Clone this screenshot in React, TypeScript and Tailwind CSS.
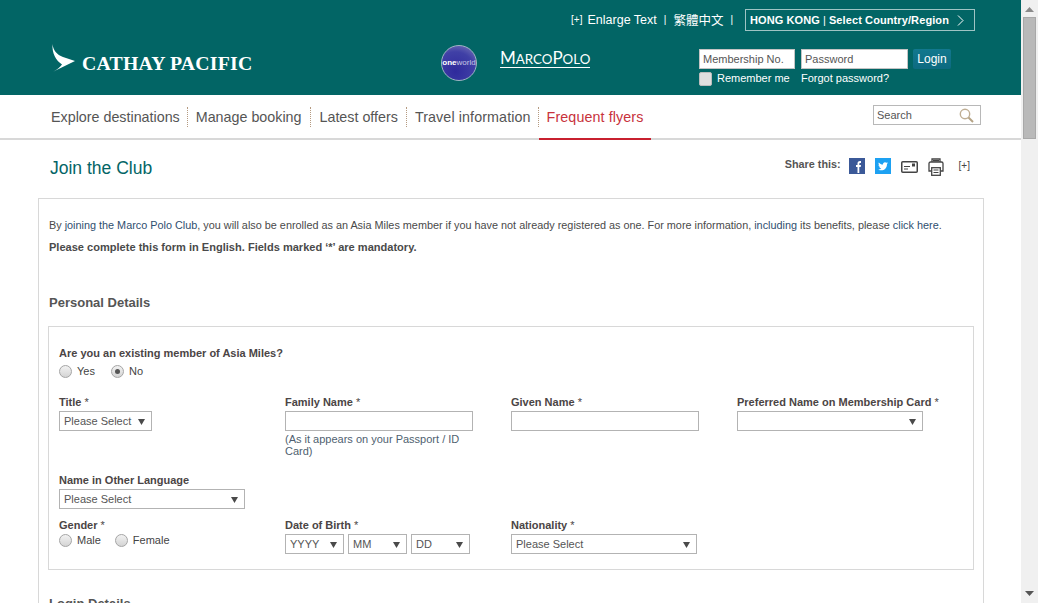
import React from "react";

const Arrow = () => (
  <svg width="7" height="7" viewBox="0 0 7 7" className="shrink-0">
    <path d="M0 1h7L3.500 7z" fill="#4a4a4a" />
  </svg>
);

const Select = ({ text, width }: { text?: string; width: string }) => (
  <div className={`${width} h-5 border border-[#b3b3b3] flex items-center justify-between pl-1 pr-[6px] text-[11px] leading-none text-[#555]`}>
    <span>{text}</span>
    <Arrow />
  </div>
);

const Radio = ({ label, checked }: { label: string; checked?: boolean }) => (
  <span className="flex items-center gap-[5px] text-[11px] leading-none text-[#444]">
    <span className="w-[13px] h-[13px] rounded-full border border-[#a5a5a5] bg-[linear-gradient(#f2f2f2,#d4d4d4)] flex items-center justify-center">
      {checked ? <span className="w-[5px] h-[5px] rounded-full bg-[#555]" /> : null}
    </span>
    {label}
  </span>
);

const Label = ({ children, required }: { children: React.ReactNode; required?: boolean }) => (
  <div className="text-[11px] leading-[13px] font-bold text-[#4b4545] whitespace-nowrap">
    {children}
    {required ? <span className="font-normal"> *</span> : null}
  </div>
);

const NavItem = ({ text, active, wide }: { text: string; active?: boolean; wide?: boolean }) => (
  <div className={`h-[45px] pt-[2px] flex items-center ${wide ? "tracking-[0.1px]" : ""} ${active ? "border-b-2 border-[#c8202f] text-[#c8323c] px-2 -mb-[2px]" : "text-[#555]"}`}>
    {text}
  </div>
);

const Sep = () => <div className="h-5 mx-2 border-l border-dotted border-[#b59a80]" />;

export default function App() {
  return (
    <div className="h-[603px] w-[1038px] flex overflow-hidden bg-white font-['Liberation_Sans',Arial,sans-serif]">
      <div className="w-[1021px] shrink-0">
        {/* header */}
        <div className="h-[95px] bg-[#026565] text-white flex flex-col">
          <div className="h-[40px] flex items-start justify-end pt-[9px] pr-[46px]">
            <div className="h-[22px] flex items-center text-[12.500px] leading-none">
              <span className="text-[10px] mr-[5px]">[+]</span>
              <span>Enlarge Text</span>
              <span className="text-[10px] ml-[7px] mr-[7px]">|</span>
              <span className="font-['Noto_Sans_CJK_TC',sans-serif]">繁體中文</span>
              <span className="text-[10px] ml-[7px] mr-[12px]">|</span>
            </div>
            <div className="w-[230px] h-[22px] border border-[#9fc4c4] flex items-center pl-[4px] text-[11px] font-bold whitespace-nowrap tracking-[0.1px]">
              HONG KONG <span className="font-normal mx-[3px]">|</span> Select Country/Region
              <svg width="7" height="11" viewBox="0 0 7 11" className="ml-[8px]">
                <path d="M1 .5l5 5-5 5" fill="none" stroke="#fff" strokeWidth="1" />
              </svg>
            </div>
          </div>
          <div className="flex">
            <div className="w-[441px] pl-[51px] flex items-start pt-[4px] shrink-0">
              <svg width="26" height="28" viewBox="0 0 26 28" className="shrink-0">
                <path d="M1.500 0C2 6 6 11 12 13l12 4L2.500 27.500C6 25.500 9.500 23 11 20.500 5 16.500.8 9 1.500 0z" fill="#fff" />
              </svg>
              <span className="ml-[5px] mt-[6px] text-[19.800px] leading-[26px] font-['Liberation_Serif',serif] font-bold whitespace-nowrap tracking-[0.2px]">CATHAY PACIFIC</span>
            </div>
            <div className="w-[36px] h-[36px] mt-[5px] rounded-full border border-[#9fb4c4] bg-[radial-gradient(circle_at_40%_75%,#2f2a9c,#4040a6_60%,#8080bc)] flex items-center justify-center text-[8px] leading-none shrink-0">
              <b>one</b><span className="text-[#c8c8e4]">world</span>
            </div>
            <div className="ml-[23px] mt-[8px] w-[90px] h-[20px] border-b border-white font-['Lato',sans-serif] text-[13.300px] leading-[19px] whitespace-nowrap shrink-0">
              <span className="text-[17px]">M</span>ARCO<span className="text-[17px]">P</span>OLO
            </div>
            <div className="ml-[109px] mt-[9px] shrink-0">
              <div className="flex">
                <input className="w-[96px] h-5 bg-white border border-[#c4c4c4] px-[3px] text-[11px] text-[#555] placeholder:text-[#555] outline-none" placeholder="Membership No." />
                <input className="ml-[6px] w-[107px] h-5 bg-white border border-[#c4c4c4] px-[3px] text-[11px] text-[#555] placeholder:text-[#555] outline-none" placeholder="Password" />
                <button className="ml-[5px] w-[38px] h-5 rounded-[2px] bg-[linear-gradient(#12788e,#0d6a80)] text-[12px] leading-none text-white">Login</button>
              </div>
              <div className="flex items-center mt-[3px] text-[11px] leading-none">
                <span className="w-[13px] h-[14px] rounded-[2px] bg-[#dfdfdf] border border-[#bcbcbc]" />
                <span className="ml-[5px] w-[84px] -mt-[1px]">Remember me</span>
                <span className="-mt-[1px]">Forgot password?</span>
              </div>
            </div>
          </div>
        </div>

        {/* nav */}
        <div className="h-[45px] border-b-2 border-[#d8d8d8] pl-[51px] pr-[40px] flex items-center text-[14.300px]">
          <NavItem text="Explore destinations" />
          <div className="h-5 ml-[7px] mr-2 border-l border-dotted border-[#b59a80]" />
          <NavItem text="Manage booking" />
          <div className="h-5 ml-[9px] mr-2 border-l border-dotted border-[#b59a80]" />
          <NavItem text="Latest offers" />
          <Sep />
          <NavItem text="Travel information" wide />
          <div className="h-5 ml-[7px] border-l border-dotted border-[#b59a80]" />
          <NavItem text="Frequent flyers" active wide />
          <div className="ml-auto -mt-[3px] w-[108px] h-5 border border-[#b8b8b8] flex items-center justify-between pl-[3px] pr-[6px] text-[11px] text-[#555]">
            Search
            <svg width="15" height="15" viewBox="0 0 15 15">
              <circle cx="6" cy="6" r="4.700" fill="none" stroke="#bfae94" strokeWidth="1.400" />
              <path d="M9.500 9.500l4.500 4.500" stroke="#b5a385" strokeWidth="2" />
            </svg>
          </div>
        </div>

        {/* title row */}
        <div className="h-[58px] pl-[50px] pr-[51px] flex justify-between">
          <h1 className="mt-[17px] text-[17.500px] leading-[22px] text-[#036566]">Join the Club</h1>
          <div className="flex items-start pt-[18px]">
            <span className="text-[10.800px] leading-[13px] font-bold text-[#555] mr-2">Share this:</span>
            <svg width="16" height="16" viewBox="0 0 16 16">
              <rect width="16" height="16" fill="#3b5998" />
              <path d="M8.500 15V9H7V7h1.500V5.500C8.500 4 9.300 3 11 3h1v2h-1c-.5 0-.7.2-.7.7V7H12l-.3 2h-1.400v6z" fill="#fff" />
            </svg>
            <svg width="16" height="16" viewBox="0 0 16 16" className="ml-[10px]">
              <rect width="16" height="16" fill="#1da1f2" />
              <path d="M13 5c-.4.2-.8.3-1.200.4.400-.3.800-.7.900-1.200-.4.200-.9.400-1.300.5A2.100 2.100 0 0 0 8 6.600C6.300 6.500 4.800 5.700 3.800 4.500c-.5 1-.3 2.100.6 2.800-.3 0-.6-.1-.9-.3 0 1 .7 1.900 1.700 2.100-.3.100-.6.100-.9 0 .3.900 1.100 1.400 2 1.500-.9.700-2 1-3.100.9 3.900 2.200 8.800.1 8.800-5.500.4-.3.700-.6 1-1z" fill="#fff" />
            </svg>
            <svg width="17" height="12" viewBox="0 0 17 12" className="ml-[10px] mt-[3px]">
              <rect x=".75" y=".75" width="15.500" height="10.500" rx="1" fill="none" stroke="#444" strokeWidth="1.500" />
              <path d="M3 5.500h6M3 8h4" stroke="#444" />
              <rect x="11" y="2.500" width="3" height="3" fill="#444" />
            </svg>
            <svg width="16" height="18" viewBox="0 0 16 18" className="ml-[10px]">
              <path d="M4 4V1h8v3M3.500 13H1V5.500A1.500 1.500 0 0 1 2.500 4h11A1.500 1.500 0 0 1 15 5.500V13h-2.500" fill="none" stroke="#444" strokeWidth="1.300" />
              <rect x="3.700" y="9.700" width="8.600" height="7.600" fill="#fff" stroke="#444" strokeWidth="1.300" />
              <path d="M5.500 12h5M5.500 14.500h5" stroke="#444" />
              <rect x="5" y="2" width="6" height="1.500" fill="#444" />
            </svg>
            <span className="ml-[15px] mt-[2px] text-[10px] leading-3 text-[#444]">[+]</span>
          </div>
        </div>

        {/* content box */}
        <div className="ml-[38px] w-[946px] border border-[#d8d8d8] border-b-0 px-[10px] pt-[20px] h-[500px]">
          <p className="text-[10.850px] leading-[13px] text-[#4a4a4a] whitespace-nowrap">
            By <span className="text-[#2f4f6f]">joining the Marco Polo Club</span>, you will also be enrolled as an Asia Miles member if you have not already registered as one. For more information, <span className="text-[#2f4f6f]">including</span> its benefits, please <span className="text-[#2f4f6f]">click here</span>.
          </p>
          <p className="mt-[9px] text-[11.050px] leading-[13px] font-bold text-[#4a4a4a]">Please complete this form in English. Fields marked ‘*’ are mandatory.</p>
          <h2 className="mt-[41px] text-[13px] leading-[16px] font-bold text-[#555]">Personal Details</h2>
          <div className="mt-[15px] -ml-[1px] w-[926px] h-[244px] border border-[#d8d8d8] pl-[10px] pt-[20px]">
            <Label>Are you an existing member of Asia Miles?</Label>
            <div className="flex gap-[16px] mt-[4px] h-[14px]">
              <Radio label="Yes" />
              <Radio label="No" checked />
            </div>
            <div className="grid grid-cols-[226px_226px_226px_226px] mt-[18px]">
              <div>
                <Label required>Title</Label>
                <div className="mt-[2px]"><Select text="Please Select" width="w-[93px]" /></div>
              </div>
              <div>
                <Label required>Family Name</Label>
                <input className="mt-[2px] block w-[188px] h-5 border border-[#b3b3b3]" />
                <p className="mt-[2px] w-[188px] text-[11px] leading-[12px] text-[#4f5f70]">(As it appears on your Passport / ID Card)</p>
              </div>
              <div>
                <Label required>Given Name</Label>
                <input className="mt-[2px] block w-[188px] h-5 border border-[#b3b3b3]" />
              </div>
              <div>
                <Label required>Preferred Name on Membership Card</Label>
                <div className="mt-[2px]"><Select width="w-[186px]" /></div>
              </div>
            </div>
            <div className="mt-[17px]">
              <Label>Name in Other Language</Label>
              <div className="mt-[2px]"><Select text="Please Select" width="w-[186px]" /></div>
            </div>
            <div className="grid grid-cols-[226px_226px_226px_226px] mt-[10px]">
              <div>
                <Label required>Gender</Label>
                <div className="flex gap-[14px] mt-[1px] h-[14px]">
                  <Radio label="Male" />
                  <Radio label="Female" />
                </div>
              </div>
              <div>
                <Label required>Date of Birth</Label>
                <div className="flex gap-1 mt-[2px]">
                  <Select text="YYYY" width="w-[59px]" />
                  <Select text="MM" width="w-[59px]" />
                  <Select text="DD" width="w-[59px]" />
                </div>
              </div>
              <div>
                <Label required>Nationality</Label>
                <div className="mt-[2px]"><Select text="Please Select" width="w-[186px]" /></div>
              </div>
            </div>
          </div>
          <h2 className="mt-[26px] text-[13px] leading-[16px] font-bold text-[#555]">Login Details</h2>
        </div>
      </div>

      {/* scrollbar */}
      <div className="w-[17px] shrink-0 bg-[#f0f0f0] flex flex-col items-center justify-between">
        <div className="flex flex-col items-center">
          <svg width="9" height="5" viewBox="0 0 9 5" className="mt-[7px]">
            <path d="M0 5l4.500-5L9 5z" fill="#8a8a8a" />
          </svg>
          <div className="mt-[5px] w-[13px] h-[122px] bg-[#b9b9b9] border border-[#a8a8a8]" />
        </div>
        <svg width="9" height="5" viewBox="0 0 9 5" className="mb-[7px]">
          <path d="M0 0l4.500 5L9 0z" fill="#555" />
        </svg>
      </div>
    </div>
  );
}
